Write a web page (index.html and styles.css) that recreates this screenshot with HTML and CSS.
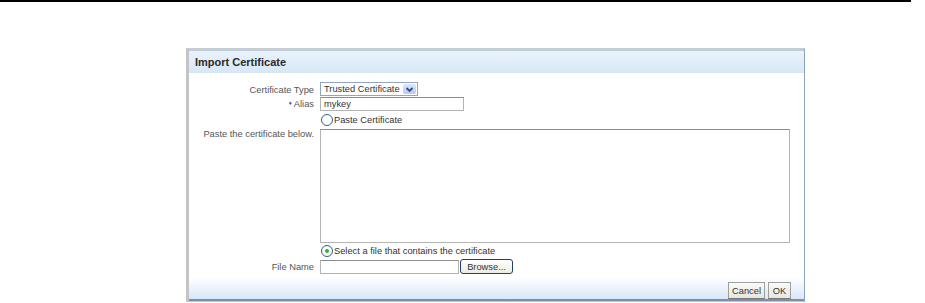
FILE: index.html
```html
<!DOCTYPE html>
<html lang="en">
<head>
  <meta charset="UTF-8">
  <title>Import Certificate</title>
  <link rel="stylesheet" href="styles.css">
</head>
<body>
<div class="top-rule"></div>

<div class="dialog">
  <div class="dialog-header">Import Certificate</div>

  <div class="dialog-body">
    <div class="form-grid">
      <label class="field-label">Certificate Type</label>
      <div class="select-box">
        <span class="select-text">Trusted Certificate</span>
        <span class="select-arrow">
          <svg width="13" height="11" viewBox="0 0 13 11"><path d="M3.5 4 L6.5 7 L9.5 4" fill="none" stroke="#2b4f8a" stroke-width="1.8"/></svg>
        </span>
      </div>

      <label class="field-label"><span class="required">&#9830;</span> Alias</label>
      <div class="text-input alias-input">mykey</div>

      <span></span>
      <div class="radio-row">
        <span class="radio"></span>
        <span>Paste Certificate</span>
      </div>

      <label class="field-label label-top">Paste the certificate below.</label>
      <div class="cert-area"></div>

      <span></span>
      <div class="radio-row radio-second">
        <span class="radio checked"></span>
        <span>Select a file that contains the certificate</span>
      </div>

      <label class="field-label">File Name</label>
      <div class="file-row">
        <div class="text-input file-input"></div>
        <button class="browse-btn">Browse...</button>
      </div>
    </div>
  </div>

  <div class="dialog-footer">
    <button class="footer-btn">Cancel</button>
    <button class="footer-btn">OK</button>
  </div>
</div>
</body>
</html>
```

FILE: styles.css
```css
body {
  margin: 0;
  background: #fff;
  font-family: 'Liberation Sans', Arial, sans-serif;
  font-size: 9.3px;
  color: #3c3c3c;
}
.top-rule {
  width: 911px;
  height: 2px;
  background: #000;
}

/* Dialog frame */
.dialog {
  width: 615px;
  margin: 46px 0 0 186px;
  border-top: 2px solid #cbcbcb;
  border-left: 3px solid #c4c4c4;
  border-right: 1px solid #8aa3c0;
  border-bottom: 1px solid #c4c4c4;
  background: #fff;
}
.dialog-header {
  height: 22px;
  line-height: 22px;
  padding-left: 6px;
  border-top: 1px solid #b9cde2;
  background: linear-gradient(#eaf3fb, #d7e6f6);
  font-size: 11px;
  font-weight: bold;
  color: #2a2a2a;
}
.dialog-body {
  padding: 9px 0 4px;
}
.form-grid {
  display: grid;
  grid-template-columns: 125px 470px;
  column-gap: 6px;
  align-items: center;
}
.field-label {
  text-align: right;
  color: #555;
}
.label-top {
  align-self: start;
  margin-top: 1px;
}
.required {
  color: #3a5f8f;
  font-size: 6px;
  vertical-align: 2px;
}

/* Controls */
.select-box {
  width: 96px;
  height: 12px;
  border: 1px solid #8fa6c2;
  display: flex;
  align-items: center;
  justify-content: space-between;
  margin-bottom: 1px;
}
.select-text {
  padding-left: 3px;
  color: #333;
}
.select-arrow {
  width: 13px;
  height: 10px;
  margin-right: 1px;
  background: linear-gradient(#dbe6fb, #b7cbf0);
  border-radius: 2px;
  display: flex;
}
.text-input {
  height: 12px;
  line-height: 12px;
  border: 1px solid #b3b3b3;
  border-top-color: #8c8c8c;
  padding-left: 3px;
  color: #333;
}
.alias-input {
  width: 139px;
}
.radio-row {
  display: flex;
  align-items: center;
  gap: 1px;
  height: 13px;
  margin: 2px 0 2px 1px;
  color: #333;
}
.radio {
  width: 10px;
  height: 10px;
  border: 1px solid #2d5c8e;
  border-radius: 50%;
  background: #fff;
  box-sizing: content-box;
  position: relative;
}
.radio.checked::after {
  content: "";
  position: absolute;
  left: 3px;
  top: 3px;
  width: 4px;
  height: 4px;
  border-radius: 50%;
  background: #2fb52f;
}
.cert-area {
  height: 112px;
  border: 1px solid #b3b3b3;
  border-top-color: #8c8c8c;
  margin-top: 1px;
}
.radio-second {
  margin: 1px 0 2px 1px;
}
.file-row {
  display: flex;
  align-items: center;
  gap: 1px;
}
.file-input {
  width: 134px;
}
.browse-btn {
  height: 15px;
  width: 53px;
  padding: 0;
  border: 1px solid #223f6f;
  border-radius: 3px;
  background: linear-gradient(#fff, #ecebe4);
  font: inherit;
  color: #333;
}

/* Footer */
.dialog-footer {
  height: 21px;
  display: flex;
  justify-content: flex-end;
  align-items: flex-end;
  gap: 3px;
  padding-right: 13px;
  background: linear-gradient(#fdfeff, #d8e7f7);
  border-bottom: 2px solid #7890ad;
}
.footer-btn {
  height: 17px;
  padding: 0 3px;
  border: 1px solid #9e9e9e;
  border-bottom-color: #777;
  background: linear-gradient(#fafaf8, #e7e6df);
  font: inherit;
  color: #333;
}
.footer-btn + .footer-btn {
  width: 23px;
}
```
